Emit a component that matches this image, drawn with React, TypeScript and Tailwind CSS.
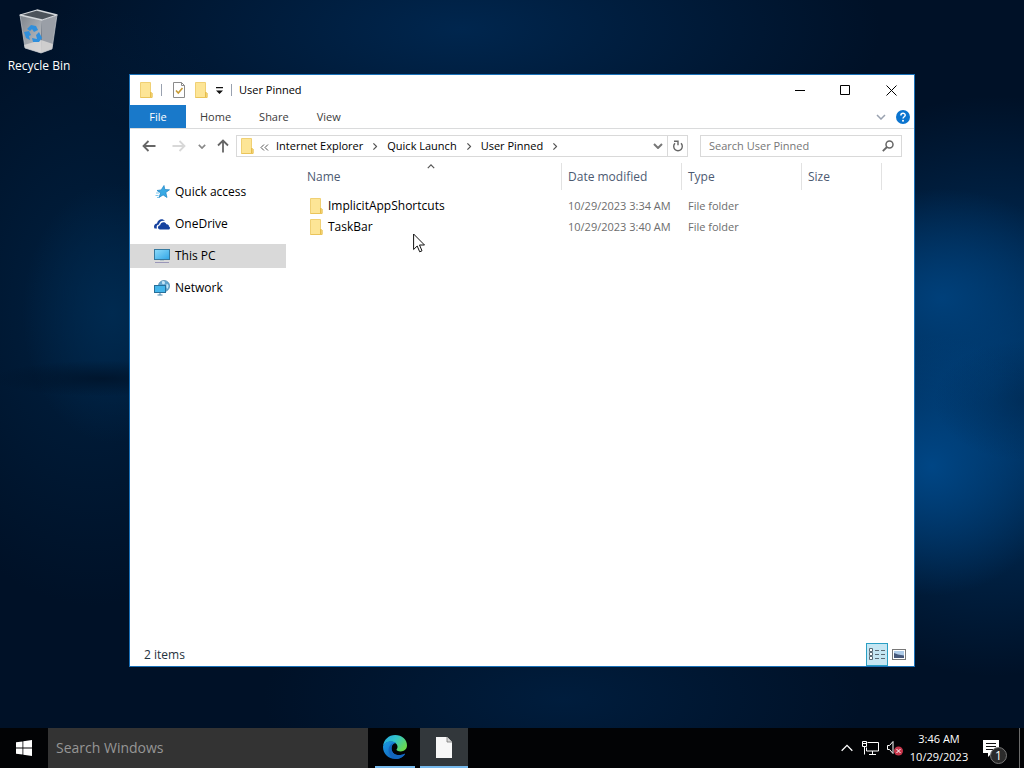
import { useState, type ReactNode } from "react";

type IconProps = { className?: string };

const sidebarItems = [
  { label: "Quick access", icon: <StarIcon /> },
  { label: "OneDrive", icon: <CloudIcon /> },
  { label: "This PC", icon: <PcIcon /> },
  { label: "Network", icon: <NetworkIcon /> },
];

const files = [
  { name: "ImplicitAppShortcuts", modified: "10/29/2023 3:34 AM", type: "File folder" },
  { name: "TaskBar", modified: "10/29/2023 3:40 AM", type: "File folder" },
];

const crumbs = ["Internet Explorer", "Quick Launch", "User Pinned"];

function FolderIcon({ className = "" }: IconProps) {
  return (
    <svg className={`h-4 w-[14px] shrink-0 ${className}`} viewBox="0 0 14 16" fill="none">
      <path d="M1.500.5h10v9.500l1.500 1v4.500H1.500z" fill="#fde596" stroke="#f0d074" />
      <path d="M11.500 10v5.500" stroke="#e6bd4a" />
      <path d="M1.500 15.500H13V11" stroke="#eac45a" />
    </svg>
  );
}

function StarIcon() {
  return (
    <svg className="h-4 w-4" viewBox="0 0 16 16">
      <path d="M10 1.500l.8 4 4.700.3-3.700 2.700 1.200 5-3.900-2.600L5 13.500l1.600-4.600L3 6.500l4.200-.6z" fill="#38a9e4" stroke="#1b82c4" strokeWidth=".7" />
      <path d="M2 9h3M1.500 11.500h3M3 13.500h2" stroke="#5cb9ea" strokeWidth=".8" />
    </svg>
  );
}

function CloudIcon() {
  return (
    <svg className="h-4 w-4" viewBox="0 0 16 16">
      <path d="M.5 12.500C-.8 10 .6 7.500 3 7.400 3.600 3.600 8.300 1.700 11 5c-3.700-.8-5.500 1-6 3.500-2 .2-2.800 2-2 4z" fill="#16429f" />
      <path d="M6 13.500c-2.800-.3-2.600-4 .1-4.200C6.600 5.900 11 5 12.400 8.200c2.100-.2 2.700 1.300 2.500 2.200 1.700.6 1.300 3-.4 3.100z" fill="#16429f" />
    </svg>
  );
}

function PcIcon() {
  return (
    <svg className="h-4 w-4" viewBox="0 0 16 16">
      <defs>
        <linearGradient id="pc-screen" x1="0" y1="0" x2="1" y2="1">
          <stop offset="0" stopColor="#8fdcfb" />
          <stop offset="1" stopColor="#2fa5e6" />
        </linearGradient>
      </defs>
      <rect x=".5" y="1.500" width="15" height="10" fill="url(#pc-screen)" stroke="#35799f" />
      <path d="M1 14.500h14" stroke="#9a97b8" />
      <path d="M6 12.500h4" stroke="#b9c4cc" />
    </svg>
  );
}

function NetworkIcon() {
  return (
    <svg className="h-4 w-4" viewBox="0 0 16 16">
      <circle cx="10" cy="6" r="5.600" fill="#62a5cf" stroke="#4b86ac" strokeWidth=".7" />
      <path d="M8 1.500c2-1 3 0 3 1.500S8 5 8 3zM12.500 4c2 0 2.500 2 1.500 4s-2-1-1.500-4z" fill="#c5e4f5" />
      <rect x=".5" y="5.500" width="11" height="7" fill="#45b5ea" stroke="#286f9a" />
      <path d="M3.500 15h5M6 13v2" stroke="#4b86ac" />
    </svg>
  );
}

function Chevron({ className = "" }: IconProps) {
  return (
    <svg className={className} viewBox="0 0 10 6" fill="none" stroke="currentColor">
      <path d="M1 1l4 4 4-4" />
    </svg>
  );
}

function ArrowIcon({ className = "" }: IconProps) {
  return (
    <svg className={`h-3 w-[14px] ${className}`} viewBox="0 0 14 12" fill="none" stroke="currentColor" strokeWidth="1.800">
      <path d="M13.500 6H1.500M6.500 1l-5 5 5 5" />
    </svg>
  );
}

function RecycleBin() {
  return (
    <svg className="h-12 w-12" viewBox="0 0 48 48">
      <defs>
        <linearGradient id="bin-side" x1="0" y1="0" x2="1" y2="1">
          <stop offset="0" stopColor="#7e858d" />
          <stop offset="1" stopColor="#c3c5c9" />
        </linearGradient>
      </defs>
      <path d="M5 8l22 5-1 33-16-5z" fill="url(#bin-side)" />
      <path d="M27 13l15-5-5 34-11 4z" fill="#9a9fa7" />
      <path d="M9 38l17-5 12 4-1 5-11 4-16-5z" fill="#dcdad8" opacity=".8" />
      <path d="M5 8l17-5 20 5-15 5z" fill="#4c535b" stroke="#d4d8dc" strokeWidth="1.300" strokeLinejoin="round" />
      <path d="M5 8l5 33 16 5 11-4 5-34" fill="none" stroke="#c6cad0" strokeWidth=".7" />
      <g fill="#2f8fdc">
        <path d="M12 22l4-4 5 1 2 4-4 2-2-3-2 2z" />
        <path d="M9 25l5-1 2 4-2 1 1 4-4-2z" />
        <path d="M24 25l3 6-3 4h-6l-1-4 5 1-1-4z" />
      </g>
    </svg>
  );
}

function EdgeIcon() {
  return (
    <svg className="h-6 w-6" viewBox="0 0 24 24">
      <defs>
        <linearGradient id="edge-top" x1="0" y1="0" x2="1" y2=".6">
          <stop offset="0" stopColor="#22a4e6" />
          <stop offset=".5" stopColor="#33c5c9" />
          <stop offset="1" stopColor="#69d94f" />
        </linearGradient>
        <linearGradient id="edge-low" x1="0" y1="0" x2="1" y2="1">
          <stop offset="0" stopColor="#1b9be3" />
          <stop offset="1" stopColor="#0d52b0" />
        </linearGradient>
      </defs>
      <path d="M0 11.500C.6 4.500 5.800 0 12.200 0 19 0 24 4.800 24 10.300c0 4-3 6.200-6.200 6.200-3 0-4.300-1.100-4.300-1.900 0-.6 1-1 1-2.900 0-2.600-2.700-4.900-6.500-4.900-4 0-7 2-8 4.700z" fill="url(#edge-top)" />
      <path d="M0 11.500C1 8 4.300 6.200 8 6.200c2.200 0 4 .7 5.200 1.900-3 .2-4.700 2.800-4.700 5.400 0 4.300 3.600 6.600 7.500 6.600 2 0 3.700-.5 5-1.200.6-.3 1 .3.700.8C19.500 22.500 16 24 12.200 24 5.400 24 0 18.600 0 12z" fill="url(#edge-low)" />
      <path d="M8.500 13.500c0 4.300 3.600 6.600 7.500 6.600 2 0 3.700-.5 5-1.200.6-.3 1 .3.700.8-1.700 2.300-4.500 3.800-7.700 4.200-5-.4-8.400-4-8.400-8.600 0-3.800 2.400-6.500 5.400-7.500-1.600 1.300-2.500 3.500-2.500 5.700z" fill="#1366bd" />
    </svg>
  );
}

function CaptionButton({ label, children }: { label: string; children: ReactNode }) {
  return (
    <button aria-label={label} className="flex h-[29px] w-[46px] items-center justify-center hover:bg-gray-200">
      <svg className="h-[11px] w-[11px]" viewBox="0 0 11 11" fill="none" stroke="#000">
        {children}
      </svg>
    </button>
  );
}

function TitleBar() {
  return (
    <div className="flex h-[30px] items-center justify-between pl-[9px]">
      <div className="flex items-center">
        <FolderIcon />
        <span className="ml-2 h-3 w-px bg-gray-400" />
        <button aria-label="Properties" className="ml-2.5">
          <svg className="h-4 w-[14px]" viewBox="0 0 14 16" fill="none">
            <path d="M1.500.5h8l3 3v12h-11z" fill="#fff" stroke="#8b8b8b" />
            <path d="M9.500.5v3h3" stroke="#8b8b8b" />
            <path d="M4 8.500l2.300 2.500L10.500 6" stroke="#c79b35" strokeWidth="1.600" />
          </svg>
        </button>
        <button aria-label="New folder" className="ml-2">
          <FolderIcon />
        </button>
        <button aria-label="Customize Quick Access Toolbar" className="ml-2 mt-0.5">
          <svg className="h-2 w-[7px]" viewBox="0 0 7 8">
            <path d="M0 0h7v1.200H0zM0 3.500h7L3.500 7z" fill="#111" />
          </svg>
        </button>
        <span className="ml-2 h-3 w-px bg-gray-400" />
        <h1 className="ml-[7px] text-[11px] text-black">User Pinned</h1>
      </div>
      <div className="flex">
        <CaptionButton label="Minimize">
          <path d="M1 5.500h10" />
        </CaptionButton>
        <CaptionButton label="Maximize">
          <path d="M.5.5h9v9h-9z" />
        </CaptionButton>
        <CaptionButton label="Close">
          <path d="M.5.5l10 10M10.500.5l-10 10" />
        </CaptionButton>
      </div>
    </div>
  );
}

function Ribbon() {
  return (
    <nav className="flex h-6 items-stretch border-b border-[#dadbdc] text-[11px] text-[#3b3b3b]">
      <button className="w-14 bg-[#1979ca] text-white">File</button>
      {["Home", "Share", "View"].map((tab) => (
        <button key={tab} className="px-[14px]">
          {tab}
        </button>
      ))}
      <div className="ml-auto flex items-center gap-2.5 pr-1">
        <button aria-label="Expand the Ribbon">
          <Chevron className="h-1.5 w-2.5 stroke-[1.5] text-gray-400" />
        </button>
        <button aria-label="Help">
          <svg className="h-[14px] w-[14px]" viewBox="0 0 14 14" fill="none">
            <circle cx="7" cy="7" r="7" fill="#0b74cf" />
            <path d="M4.900 5.400c0-2.800 4.300-2.700 4.300-.2C9.200 6.800 7 6.700 7 8.600" stroke="#fff" strokeWidth="1.500" />
            <circle cx="7" cy="10.800" r="1" fill="#fff" />
          </svg>
        </button>
      </div>
    </nav>
  );
}

function AddressBar() {
  return (
    <div className="flex items-center py-1.5 pl-3 pr-3 text-[11px]">
      <button aria-label="Back" className="text-[#666]">
        <ArrowIcon />
      </button>
      <button aria-label="Forward" className="ml-4 text-[#d8d8d8]">
        <ArrowIcon className="rotate-180" />
      </button>
      <button aria-label="Recent locations" className="ml-3 text-[#888]">
        <Chevron className="h-[5px] w-2 stroke-2" />
      </button>
      <button aria-label="Up" className="ml-2.5 text-[#666]">
        <ArrowIcon className="rotate-90" />
      </button>
      <div className="ml-1.5 flex h-[22px] flex-1 items-center border border-[#d9d9d9]">
        <FolderIcon className="ml-[3px]" />
        <svg className="ml-1.5 mt-0.5 h-[7px] w-[9px]" viewBox="0 0 9 7" fill="none" stroke="#555">
          <path d="M4 .5l-3 3 3 3M8 .5l-3 3 3 3" />
        </svg>
        <div className="flex pl-[7px]">
          {crumbs.map((crumb) => (
            <div key={crumb} className="flex items-center">
              <button className="text-black">{crumb}</button>
              <Chevron className="mx-2 h-[5px] w-2 -rotate-90 stroke-[1.5] text-[#555]" />
            </div>
          ))}
        </div>
        <button aria-label="Previous locations" className="ml-auto mr-1 text-[#777]">
          <Chevron className="h-1.5 w-2.5 stroke-2" />
        </button>
        <button aria-label="Refresh" className="flex h-full w-5 items-center justify-center border-l border-[#d9d9d9]">
          <svg className="h-3 w-3" viewBox="0 0 12 12" fill="none" stroke="#666" strokeWidth="1.400">
            <path d="M3 3.300a4.300 4.300 0 1 0 6 0M2 1.200h4v4" />
          </svg>
        </button>
      </div>
      <label className="ml-3 flex h-[22px] w-[202px] items-center border border-[#d9d9d9] pl-2 pr-[7px]">
        <input
          aria-label="Search User Pinned"
          placeholder="Search User Pinned"
          className="w-full min-w-0 outline-none placeholder:text-[#767676]"
        />
        <svg className="h-3 w-3 shrink-0" viewBox="0 0 12 12" fill="none" stroke="#666" strokeWidth="1.500">
          <circle cx="7.500" cy="4.500" r="3.500" />
          <path d="M5 7L.8 11.200" strokeWidth="1.800" />
        </svg>
      </label>
    </div>
  );
}

function Sidebar() {
  const [selected, setSelected] = useState("This PC");

  return (
    <aside className="mr-[15px] flex w-[156px] shrink-0 flex-col gap-2 pt-[17px]">
      {sidebarItems.map((item) => (
        <button
          key={item.label}
          onClick={() => setSelected(item.label)}
          className={`flex h-6 items-center gap-[5px] pl-6 text-black ${selected === item.label ? "bg-[#d9d9d9]" : ""}`}
        >
          {item.icon}
          {item.label}
        </button>
      ))}
    </aside>
  );
}

function FileTable() {
  return (
    <div className="relative min-w-0 flex-1">
      <table className="w-[581px] table-fixed border-collapse text-left text-[11px] text-[#6d6d6d]">
        <thead className="text-[12px] text-[#4c5a72]">
          <tr>
            {[
              ["Name", "w-[261px]"],
              ["Date modified", "w-[120px]"],
              ["Type", "w-[120px]"],
              ["Size", "w-[80px]"],
            ].map(([label, width]) => (
              <th key={label} className={`p-0 pb-[5px] font-normal ${width}`}>
                <div className="flex h-[27px] items-center border-r border-[#e2e2e2] pl-1.5">{label}</div>
              </th>
            ))}
          </tr>
        </thead>
        <tbody>
          {files.map((file) => (
            <tr key={file.name} className="h-[21px] hover:bg-sky-50">
              <td className="p-0 pl-2">
                <div className="flex items-center gap-[5px] text-[12px] text-black">
                  <FolderIcon />
                  {file.name}
                </div>
              </td>
              <td className="whitespace-nowrap p-0 pl-1.5">{file.modified}</td>
              <td className="p-0 pl-1.5">{file.type}</td>
              <td />
            </tr>
          ))}
        </tbody>
      </table>
      <Chevron className="absolute left-[126px] top-px h-[5px] w-2 rotate-180 stroke-[1.5] text-[#555]" />
    </div>
  );
}

function StatusBar() {
  return (
    <footer className="flex h-[23px] items-center justify-between pl-[14px] pr-1 text-[#1f3340]">
      <span>2 items</span>
      <div className="flex h-full items-center">
        <button aria-label="Details view" className="flex h-full w-[22px] items-center justify-center border border-[#2a9fc4] bg-[#c5e6f3]">
          <svg className="h-[13px] w-4" viewBox="0 0 16 13" fill="none" stroke="#5b6b75">
            <path d="M.5.5h3v3h-3zM.5 4.500h3v3h-3zM.5 8.500h3v3h-3z" fill="#fff" />
            <path d="M6 2.500h4M12 2.500h4M6 6.500h4M12 6.500h4M6 10.500h4M12 10.500h4" />
          </svg>
        </button>
        <button aria-label="Large icons view" className="flex w-[22px] justify-center">
          <svg className="h-[11px] w-[14px]" viewBox="0 0 14 11">
            <rect x=".5" y=".5" width="13" height="10" fill="#fff" stroke="#777" />
            <path d="M2 2h10v7H2z" fill="#aecbe8" />
            <path d="M2 4l4 1.500 6 1V9H2z" fill="#46587a" />
          </svg>
        </button>
      </div>
    </footer>
  );
}

function ExplorerWindow() {
  return (
    <section className="absolute bottom-[61px] left-[129px] right-[109px] top-[74px] flex flex-col border border-[#1a71b8] bg-white">
      <TitleBar />
      <Ribbon />
      <AddressBar />
      <div className="flex min-h-0 flex-1">
        <Sidebar />
        <FileTable />
      </div>
      <StatusBar />
    </section>
  );
}

function Tray() {
  return (
    <div className="ml-auto flex items-center text-[11px] text-white">
      <button aria-label="Show hidden icons">
        <Chevron className="h-2 w-[14px] rotate-180" />
      </button>
      <svg className="ml-2 h-[15px] w-[17px]" viewBox="0 0 17 15" fill="none" stroke="#fff">
        <path d="M5.500 1.500h11v8.500h-12V6.500M10.500 10v3M7 13.500h7M.5.500h4v5h-4zM1 2.500h3M2.500 5.500v8" />
      </svg>
      <svg className="ml-2 h-4 w-4" viewBox="0 0 16 16" fill="none">
        <path d="M.5 5.500h2l3.500-4v12l-3.500-4h-2z" stroke="#fff" />
        <circle cx="11.500" cy="11" r="4.500" fill="#c7364b" />
        <path d="M9.500 9l4 4M13.500 9l-4 4" stroke="#fff" />
      </svg>
      <button className="ml-1.5 w-[60px] text-center leading-[18px]">
        3:46 AM
        <br />
        10/29/2023
      </button>
      <button aria-label="Notifications" className="ml-3.5">
        <svg className="h-8 w-6" viewBox="0 -8 24 32" fill="none">
          <path d="M0 0h16v13H9l-4 4v-4H0z" fill="#fff" />
          <path d="M3 3.500h10M3 6.500h10M3 9.500h7" stroke="#111" />
          <circle cx="15.500" cy="15.500" r="8" fill="#2b2b2b" stroke="#777" />
          <text x="15.500" y="20" fill="#fff" textAnchor="middle" className="text-[12px]">
            1
          </text>
        </svg>
      </button>
      <span className="ml-3 mr-1 h-10 w-px bg-[#6b6b6b]" />
    </div>
  );
}

function Taskbar() {
  return (
    <footer className="flex h-10 shrink-0 bg-[#020305]">
      <button aria-label="Start" className="flex w-12 items-center justify-center">
        <svg className="h-4 w-4" viewBox="0 0 16 16" fill="#fff">
          <path d="M0 2.300L6.500 1.400v6.200H0zM7.300 1.300L16 0v7.600H7.300zM0 8.400h6.500v6.200L0 13.700zM7.300 8.400H16V16l-8.700-1.300z" />
        </svg>
      </button>
      <input
        aria-label="Search Windows"
        placeholder="Search Windows"
        className="w-80 bg-[#333] px-2 text-[14px] text-white outline-none placeholder:text-[#969696]"
      />
      <button aria-label="Microsoft Edge" className="mx-[7px] flex w-10 items-center justify-center border-b-2 border-[#76b9ed]">
        <EdgeIcon />
      </button>
      <button aria-label="User Pinned" className="-ml-[2px] flex w-12 items-center justify-center border-b-2 border-[#76b9ed] bg-[#32373b]">
        <svg className="h-[21px] w-4" viewBox="0 0 16 21">
          <path d="M0 0h11l5 5v16H0z" fill="#f7f7f7" />
          <path d="M11 0v5h5" fill="#d5d5d5" stroke="#777" strokeWidth=".8" />
        </svg>
      </button>
      <Tray />
    </footer>
  );
}

export default function App() {
  return (
    <div className="flex h-screen flex-col overflow-hidden bg-[#001127] font-['Open_Sans','Noto_Sans',sans-serif] text-[12px] leading-4">
      <main className="relative flex-1 bg-[radial-gradient(ellipse_110px_18px_at_10%_52%,#000f22aa,transparent),radial-gradient(ellipse_90px_60px_at_100%_55%,#00254a88,transparent),radial-gradient(ellipse_130px_130px_at_91%_64%,#004685,transparent),radial-gradient(ellipse_140px_110px_at_92%_41%,#00407a,transparent),radial-gradient(ellipse_260px_290px_at_97%_53%,#003a70,transparent),radial-gradient(ellipse_90px_130px_at_11%_43%,#002a50,transparent),radial-gradient(ellipse_200px_300px_at_9%_42%,#002040,transparent),radial-gradient(ellipse_420px_160px_at_45%_4%,#00264e,transparent),radial-gradient(ellipse_300px_120px_at_55%_96%,#001d3d,transparent)]">
        <button className="absolute left-0 top-[7px] flex w-[78px] flex-col items-center gap-[3px] text-white">
          <RecycleBin />
          Recycle Bin
        </button>
        <ExplorerWindow />
        <svg className="absolute left-[413px] top-[233px] h-5 w-3" viewBox="0 0 12 20">
          <path d="M.6 1v15.500l3.600-3.500 2.500 5.800 2.300-1L6.500 12h5z" fill="#fff" stroke="#111" />
        </svg>
      </main>
      <Taskbar />
    </div>
  );
}
